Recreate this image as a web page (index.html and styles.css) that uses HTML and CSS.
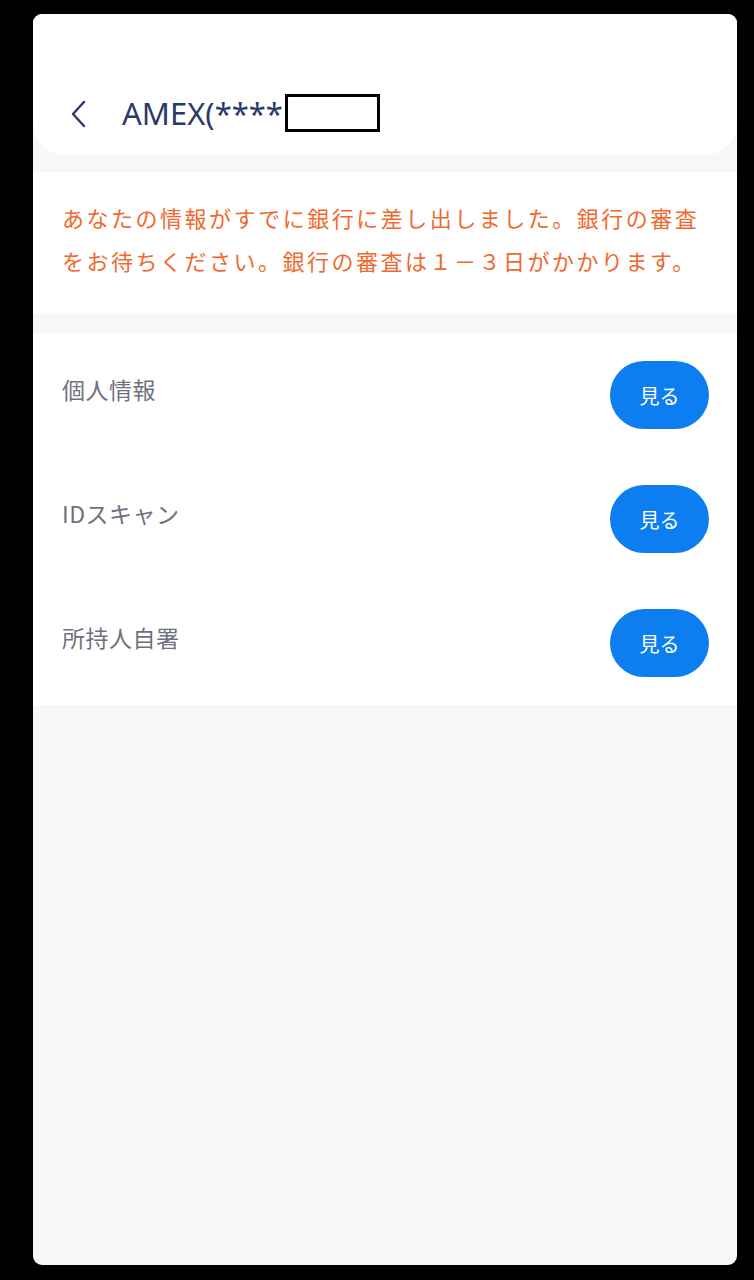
FILE: index.html
```html
<!DOCTYPE html>
<html lang="ja">
<head>
<meta charset="utf-8">
<link rel="stylesheet" href="styles.css">
</head>
<body>
<div class="panel">
  <header class="header">
    <svg class="back" width="18" height="28" viewBox="0 0 18 28"><polyline points="14,2 3,14 14,26" fill="none" stroke="#2b3a67" stroke-width="2.4" stroke-linecap="round" stroke-linejoin="round"/></svg>
    <h1 class="title">AMEX(****<span class="redact"></span></h1>
  </header>
  <section class="notice">あなたの情報がすでに銀行に差し出しました。銀行の審査をお待ちください。銀行の審査は１－３日がかかります。</section>
  <section class="list">
    <div class="row"><span class="label">個人情報</span><button class="btn">見る</button></div>
    <div class="row"><span class="label">IDスキャン</span><button class="btn">見る</button></div>
    <div class="row"><span class="label">所持人自署</span><button class="btn">見る</button></div>
  </section>
</div>
</body>
</html>
```
FILE: styles.css
```css
html, body { margin: 0; padding: 0; background: #000; }
body { font-family: "Noto Sans", "Noto Sans CJK JP", sans-serif; }
.panel {
  margin: 14px 17px 0 33px;
  width: 704px;
  height: 1251px;
  background: #f6f7f9;
  border-radius: 9px;
  overflow: hidden;
}
.header {
  height: 141px;
  background: #fff;
  border-radius: 0 0 32px 32px;
  display: flex;
  align-items: center;
  padding: 56px 0 0 37px;
  box-sizing: border-box;
}
.back { margin-top: 2px; }
.title {
  margin: 0 0 0 34px;
  font-weight: 400;
  font-size: 31px;
  color: #2b3a67;
  display: flex;
  align-items: center;
  letter-spacing: 0;
}
.redact {
  display: inline-block;
  width: 89px;
  height: 32px;
  border: 3px solid #000;
  background: #fff;
  margin-left: 2px;
}
.notice {
  margin-top: 17px;
  background: #fff;
  padding: 24px 29px 0 29px;
  font-family: "Noto Sans CJK JP", sans-serif;
  font-size: 22px;
  letter-spacing: 2.5px;
  line-height: 43px;
  color: #f0692e;
  height: 142px;
  box-sizing: border-box;
}
.list {
  margin-top: 19px;
  background: #fff;
}
.row {
  height: 124px;
  display: flex;
  align-items: center;
  justify-content: space-between;
  padding: 0 28px 0 29px;
}
.label {
  font-family: "Noto Sans CJK JP", sans-serif;
  font-size: 23px;
  letter-spacing: 0.5px;
  color: #6d727e;
  margin-bottom: 12px;
}
.btn {
  width: 99px;
  height: 68px;
  border: none;
  border-radius: 34px;
  background: #0d7ef0;
  color: #fff;
  font-family: "Noto Sans CJK JP", sans-serif;
  font-size: 20px;
  padding: 0;
}
```
